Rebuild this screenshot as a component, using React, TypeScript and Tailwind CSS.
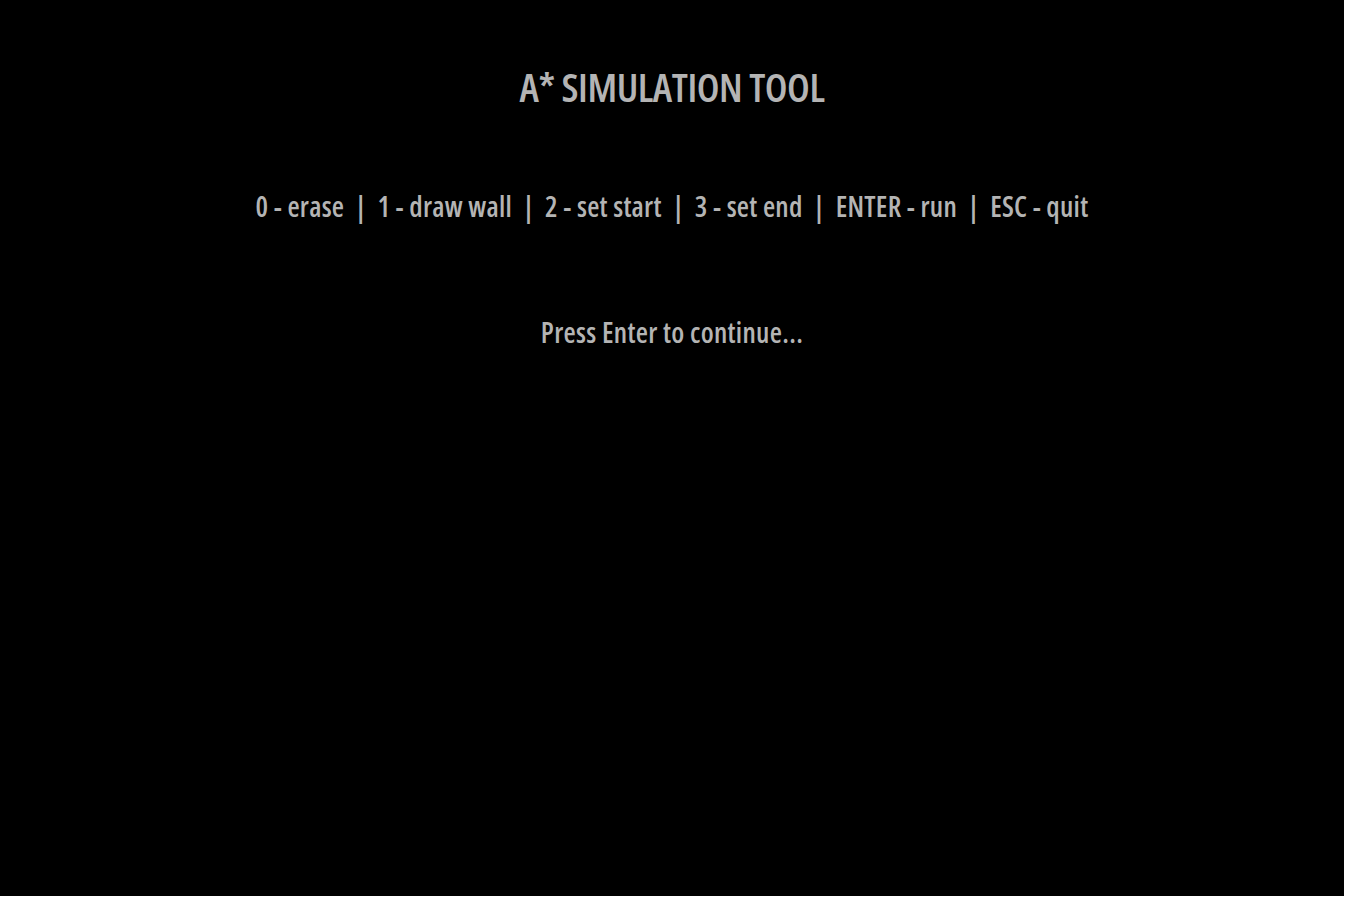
const font = { fontFamily: '"Open Sans", sans-serif', fontStretch: '75%' } as const;

export default function App() {
  return (
    <div className="w-[1346px] h-[898px] bg-white">
      <div
        className="w-[1344px] h-[896px] bg-black flex flex-col items-center text-[#b4b4b4] pt-[67px]"
        style={font}
      >
        <div className="text-[40px] leading-[40px] font-semibold tracking-[-0.45px] whitespace-pre">A* SIMULATION TOOL</div>
        <div className="mt-[85px] text-[28px] leading-[28px] font-semibold tracking-[0.25px] whitespace-pre">
          0 - erase  |  1 - draw wall  |  2 - set start  |  3 - set end  |  ENTER - run  |  ESC - quit
        </div>
        <div className="mt-[98px] text-[28px] leading-[28px] font-semibold tracking-[0.3px] whitespace-pre">Press Enter to continue...</div>
      </div>
    </div>
  );
}
